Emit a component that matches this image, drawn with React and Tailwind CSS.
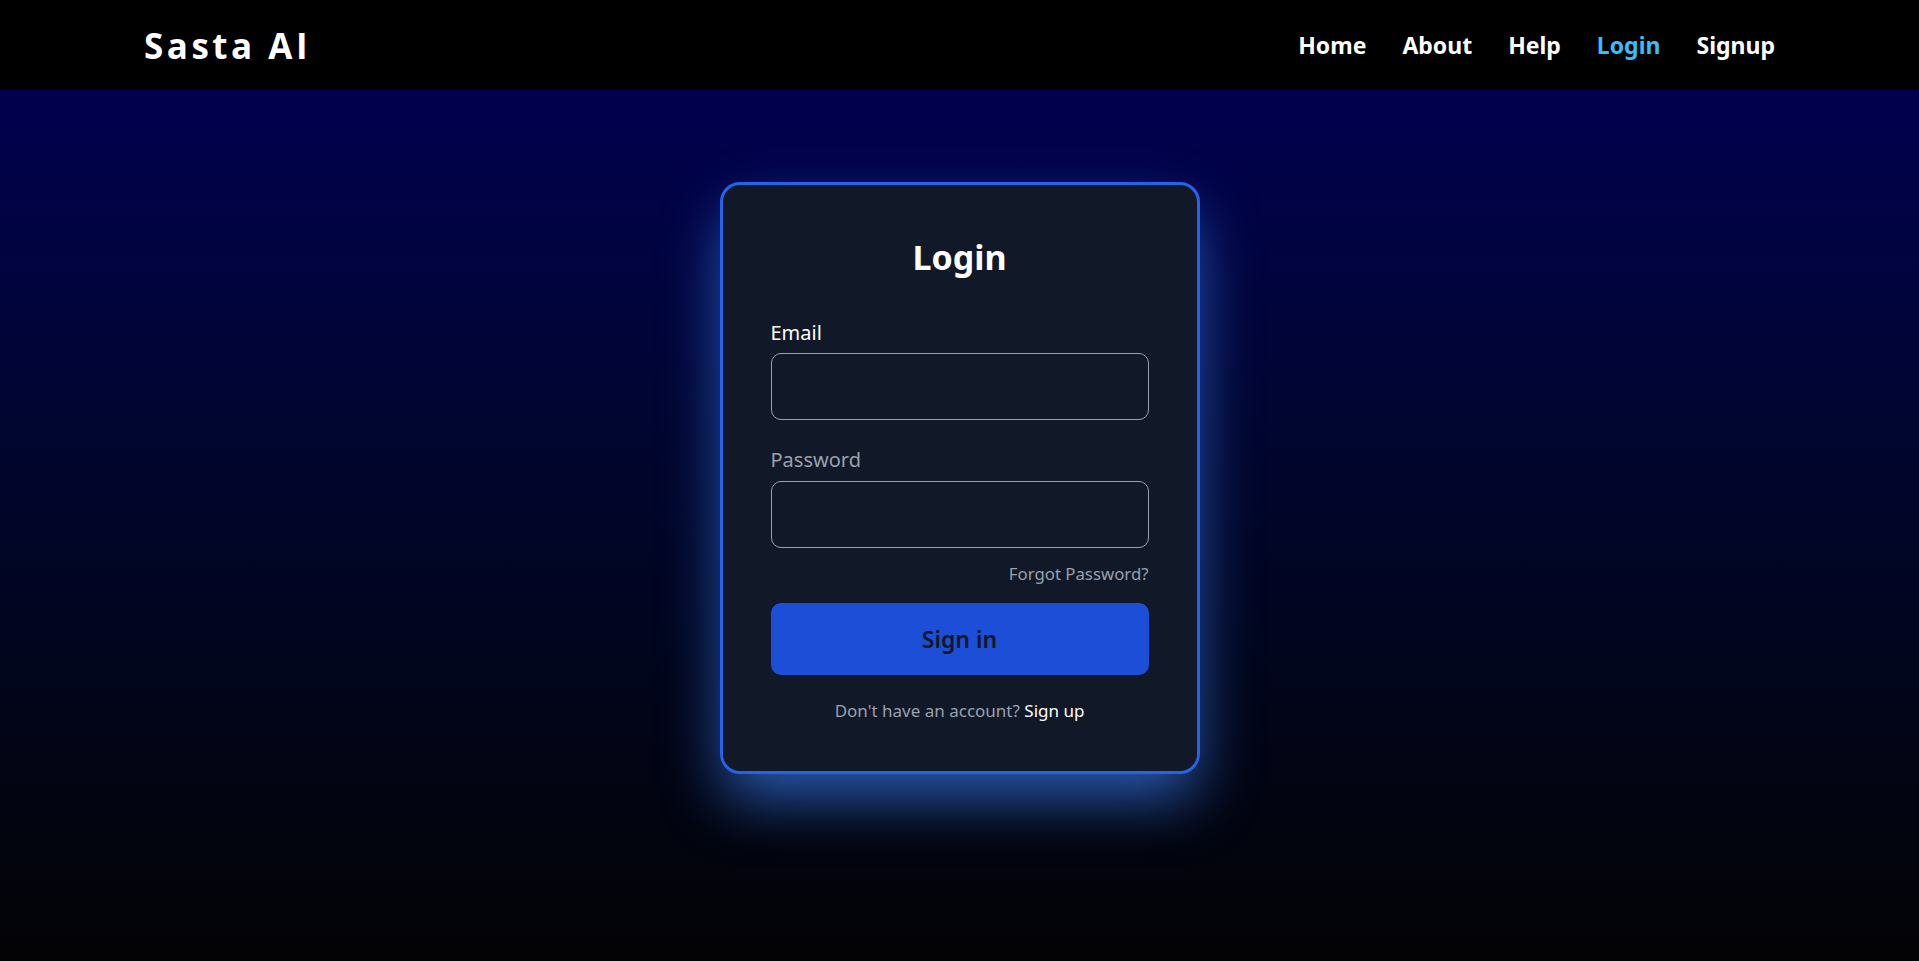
const links = ["Home", "About", "Help", "Login", "Signup"];

const App = () => {
  return (
    <div className="min-h-screen flex flex-col font-['Noto_Sans',sans-serif]">
      <nav className="h-[90px] bg-black flex items-center justify-between px-[144px]">
        <span className="text-white text-[35px] font-bold tracking-[0.1em] leading-none font-['Open_Sans',sans-serif]">
          Sasta AI
        </span>
        <ul className="flex items-center gap-[36px]">
          {links.map((l) => (
            <li key={l}>
              <a
                href="#"
                className={`text-[23px] font-bold ${l === "Login" ? "text-[#38bdf8]" : "text-white"}`}
              >
                {l}
              </a>
            </li>
          ))}
        </ul>
      </nav>

      <main className="flex-1 bg-linear-to-b from-[#00004f] to-[#030306] flex justify-center pt-[92px] pb-[187px]">
        <div className="w-[480px] h-[592px] bg-[#111827] border-[3px] border-[#2563eb] rounded-[20px] px-[48px] pt-[50px] shadow-[0_28px_60px_-5px_rgba(59,130,246,0.7)]">
          <h2 className="text-white text-[34px] font-bold text-center leading-[45px]">Login</h2>

          <form className="mt-[38px]" onSubmit={(e) => e.preventDefault()}>
            <label className="block text-white text-[20px] leading-[30px] mb-[5px]">Email</label>
            <input
              type="email"
              className="w-full h-[67px] bg-[#111827] border border-gray-400 rounded-[10px] px-4 text-white text-[20px] outline-none"
            />

            <label className="block text-gray-400 text-[20px] leading-[30px] mt-[25px] mb-[6px]">
              Password
            </label>
            <input
              type="password"
              className="w-full h-[67px] bg-[#111827] border border-gray-400 rounded-[10px] px-4 text-white text-[20px] outline-none"
            />

            <div className="text-right mt-[13px]">
              <a href="#" className="text-gray-400 text-[16.8px] leading-[25px]">
                Forgot Password?
              </a>
            </div>

            <button
              type="submit"
              className="mt-[17px] w-full h-[72px] bg-[#1d4ed8] rounded-[10px] text-gray-900 text-[23px] font-semibold"
            >
              Sign in
            </button>

            <p className="mt-[23px] text-center text-gray-400 text-[17px] leading-[25px]">
              Don't have an account?{" "}
              <a href="#" className="text-white">
                Sign up
              </a>
            </p>
          </form>
        </div>
      </main>
    </div>
  );
};

export default App;
